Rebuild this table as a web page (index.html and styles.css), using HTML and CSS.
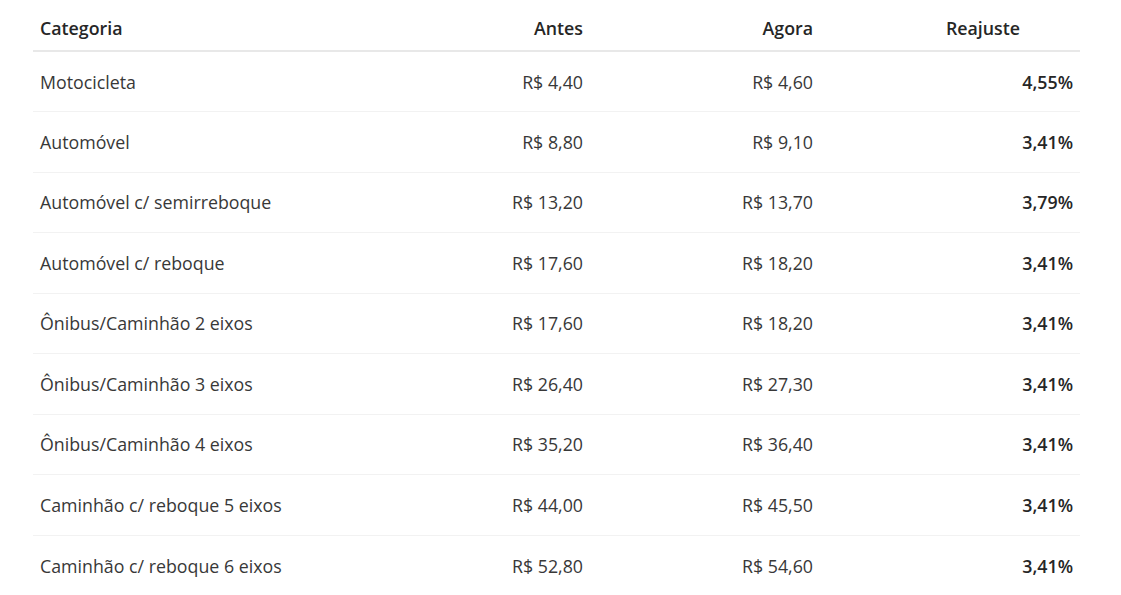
FILE: index.html
```html
<html>
<head>
<meta charset="utf-8">
<link rel="stylesheet" href="styles.css">
</head>
<body>

<table class="tarifas">
  <thead>
    <tr>
      <th class="cat">Categoria</th>
      <th class="num">Antes</th>
      <th class="num">Agora</th>
      <th class="pct-head">Reajuste</th>
    </tr>
  </thead>
  <tbody>
    <tr><td class="cat">Motocicleta</td><td class="num">R$ 4,40</td><td class="num">R$ 4,60</td><td class="pct">4,55%</td></tr>
    <tr><td class="cat">Automóvel</td><td class="num">R$ 8,80</td><td class="num">R$ 9,10</td><td class="pct">3,41%</td></tr>
    <tr><td class="cat">Automóvel c/ semirreboque</td><td class="num">R$ 13,20</td><td class="num">R$ 13,70</td><td class="pct">3,79%</td></tr>
    <tr><td class="cat">Automóvel c/ reboque</td><td class="num">R$ 17,60</td><td class="num">R$ 18,20</td><td class="pct">3,41%</td></tr>
    <tr><td class="cat">Ônibus/Caminhão 2 eixos</td><td class="num">R$ 17,60</td><td class="num">R$ 18,20</td><td class="pct">3,41%</td></tr>
    <tr><td class="cat">Ônibus/Caminhão 3 eixos</td><td class="num">R$ 26,40</td><td class="num">R$ 27,30</td><td class="pct">3,41%</td></tr>
    <tr><td class="cat">Ônibus/Caminhão 4 eixos</td><td class="num">R$ 35,20</td><td class="num">R$ 36,40</td><td class="pct">3,41%</td></tr>
    <tr><td class="cat">Caminhão c/ reboque 5 eixos</td><td class="num">R$ 44,00</td><td class="num">R$ 45,50</td><td class="pct">3,41%</td></tr>
    <tr><td class="cat">Caminhão c/ reboque 6 eixos</td><td class="num">R$ 52,80</td><td class="num">R$ 54,60</td><td class="pct">3,41%</td></tr>
  </tbody>
</table>

</body>
</html>
```

FILE: styles.css
```css
body {
  margin: 0;
  background: #fff;
  font-family: "Open Sans", "Noto Sans", sans-serif;
  color: #383838;
}

.tarifas {
  margin-left: 33px;
  width: 1047px;
  border-collapse: collapse;
  table-layout: fixed;
  font-size: 17.8px;
}

.tarifas th {
  height: 51px;
  padding: 6px 7px 0;
  font-weight: 600;
  color: #262626;
  border-bottom: 2px solid #e8e8e8;
}

.tarifas td {
  height: 60.5px;
  padding: 0 7px;
  border-bottom: 1px solid #f2f2f2;
}

.tarifas tbody tr:last-child td {
  border-bottom: none;
}

.cat {
  width: 313px;
  text-align: left;
}

.num {
  width: 216px;
  text-align: right;
}

.pct-head {
  text-align: right;
  padding-right: 60px !important;
}

.pct {
  text-align: right;
  font-weight: 600;
  color: #262626;
}
```
